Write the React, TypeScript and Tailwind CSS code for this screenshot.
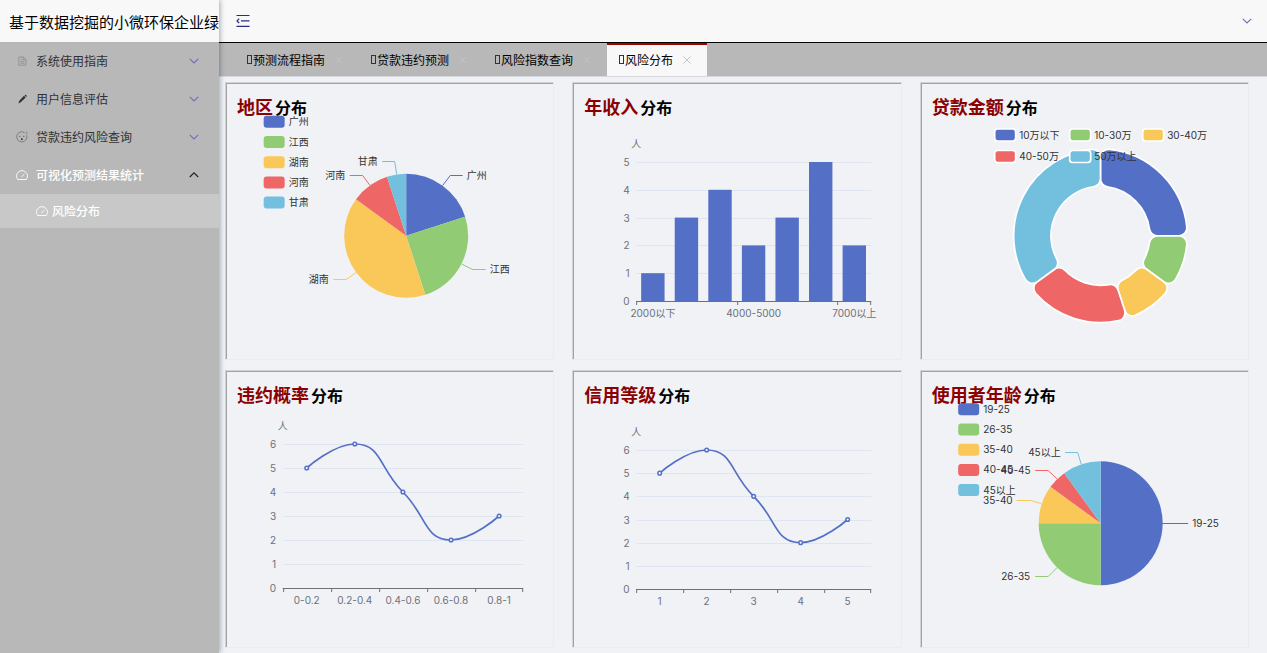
import React from "react";

const BLUE = "#5470c6";
const GREEN = "#91cc75";
const YELLOW = "#fac858";
const RED = "#ee6666";
const CYAN = "#73c0de";
const PALETTE = [BLUE, GREEN, YELLOW, RED, CYAN];

const VIEW_W = 325;
const VIEW_H = 274;

type Pt = [number, number];

function polar(cx: number, cy: number, r: number, deg: number): Pt {
  const a = ((deg - 90) * Math.PI) / 180;
  return [cx + r * Math.cos(a), cy + r * Math.sin(a)];
}

const fmt = (p: Pt) => `${p[0].toFixed(2)} ${p[1].toFixed(2)}`;

function slices(values: number[]) {
  const total = values.reduce((a, b) => a + b, 0);
  let at = 0;
  return values.map((v) => {
    const from = at;
    at += (v / total) * 360;
    return { from, to: at };
  });
}

function wedge(cx: number, cy: number, r: number, from: number, to: number) {
  const large = to - from > 180 ? 1 : 0;
  return `M${cx} ${cy}L${fmt(polar(cx, cy, r, from))}A${r} ${r} 0 ${large} 1 ${fmt(polar(cx, cy, r, to))}Z`;
}

function roundedRing(cx: number, cy: number, r0: number, r1: number, c: number, from: number, to: number) {
  const deg = 180 / Math.PI;
  const ao = Math.asin(c / (r1 - c)) * deg;
  const ai = Math.asin(c / (r0 + c)) * deg;
  const lo = Math.sqrt((r1 - c) ** 2 - c * c);
  const li = Math.sqrt((r0 + c) ** 2 - c * c);
  const p = (r: number, a: number) => fmt(polar(cx, cy, r, a));
  return [
    `M${p(lo, from)}`,
    `A${c} ${c} 0 0 1 ${p(r1, from + ao)}`,
    `A${r1} ${r1} 0 ${to - from - 2 * ao > 180 ? 1 : 0} 1 ${p(r1, to - ao)}`,
    `A${c} ${c} 0 0 1 ${p(lo, to)}`,
    `L${p(li, to)}`,
    `A${c} ${c} 0 0 1 ${p(r0, to - ai)}`,
    `A${r0} ${r0} 0 0 0 ${p(r0, from + ai)}`,
    `A${c} ${c} 0 0 1 ${p(li, from)}`,
    "Z",
  ].join("");
}

const clamp = (v: number, a: number, b: number) => Math.max(Math.min(a, b), Math.min(Math.max(a, b), v));

function smoothPath(pts: Pt[]) {
  let d = `M${fmt(pts[0])}`;
  let out: Pt = pts[0];
  for (let i = 1; i < pts.length; i++) {
    const [x, y] = pts[i];
    const [px, py] = pts[i - 1];
    let inn: Pt = [x, y];
    let nextOut: Pt = [x, y];
    if (i < pts.length - 1) {
      const [nx, ny] = pts[i + 1];
      const lp = Math.hypot(x - px, y - py);
      const ln = Math.hypot(nx - x, ny - y);
      const k = (0.5 * ln) / (ln + lp);
      const ox = clamp(x + (nx - px) * k, x, nx);
      const oy = clamp(y + (ny - py) * k, y, ny);
      const ix = clamp(x - ((ox - x) * lp) / ln, px, x);
      const iy = clamp(y - ((oy - y) * lp) / ln, py, y);
      inn = [ix, iy];
      nextOut = [x + ((x - ix) * ln) / lp, y + ((y - iy) * ln) / lp];
    }
    d += `C${fmt(out)} ${fmt(inn)} ${fmt([x, y])}`;
    out = nextOut;
  }
  return d;
}

function Canvas({ label, children }: { label: string; children: React.ReactNode }) {
  return (
    <svg
      role="img"
      aria-label={label}
      viewBox={`0 0 ${VIEW_W} ${VIEW_H}`}
      className="col-start-1 row-start-1 h-[274px] w-full font-['Inter','Noto_Sans_CJK_SC',sans-serif] text-[10px]"
    >
      {children}
    </svg>
  );
}

function Label({ x, y, anchor = "start", fill = "#333", children }: {
  x: number; y: number; anchor?: "start" | "middle" | "end"; fill?: string; children: React.ReactNode;
}) {
  return (
    <text x={x} y={y + 3.5} textAnchor={anchor} fill={fill}>
      {children}
    </text>
  );
}

type Callout = { name: string; value: number; line: Pt[]; text: Pt; end?: boolean };

function PieChart({ label, cx, cy, legendX, legendTop, data }: {
  label: string; cx: number; cy: number; legendX: number; legendTop: number; data: Callout[];
}) {
  const parts = slices(data.map((d) => d.value));
  return (
    <Canvas label={label}>
      {data.map((d, i) => (
        <g key={d.name}>
          <path d={wedge(cx, cy, 62, parts[i].from, parts[i].to)} fill={PALETTE[i]} />
          <polyline points={d.line.map((p) => p.join(",")).join(" ")} fill="none" stroke={PALETTE[i]} />
          <Label x={d.text[0]} y={d.text[1]} anchor={d.end ? "end" : "start"}>{d.name}</Label>
        </g>
      ))}
      {data.map((d, i) => (
        <g key={d.name}>
          <rect x={legendX} y={legendTop + i * 20.2} width={21} height={12} rx={3} fill={PALETTE[i]} />
          <Label x={legendX + 25} y={legendTop + 6 + i * 20.2}>{d.name}</Label>
        </g>
      ))}
    </Canvas>
  );
}

type AxisProps = { x0: number; x1: number; y0: number; top: number; max: number; ticks: number[]; nameY: number };

function Axes({ x0, x1, y0, top, max, ticks, nameY }: AxisProps) {
  const step = (y0 - top) / max;
  const levels = Array.from({ length: max + 1 }, (_, i) => i);
  return (
    <g>
      {levels.map((v) => {
        const y = Math.round(y0 - v * step);
        return (
          <g key={v}>
            {v > 0 && <line x1={x0} x2={x1} y1={y + 0.5} y2={y + 0.5} stroke="#e0e6f1" />}
            <Label x={x0 - 6.5} y={y} anchor="end" fill="#6e7079">{v}</Label>
          </g>
        );
      })}
      <Label x={x0} y={nameY + 0.5} anchor="middle" fill="#6e7079">人</Label>
      <line x1={x0} x2={x1} y1={y0 + 0.5} y2={y0 + 0.5} stroke="#6e7079" />
      {ticks.map((t) => {
        const x = Math.round(t) + 0.5;
        return <line key={t} x1={x} x2={x} y1={y0} y2={y0 + 4} stroke="#6e7079" />;
      })}
    </g>
  );
}

function BarChart() {
  const values = [1, 3, 4, 2, 3, 5, 2];
  const names = ["2000以下", "", "", "4000-5000", "", "", "7000以上"];
  const x0 = 62, x1 = 297, y0 = 217, top = 78;
  const band = (x1 - x0) / values.length;
  const step = (y0 - top) / 5;
  return (
    <Canvas label="年收入分布">
      <Axes x0={x0} x1={x1} y0={y0} top={top} max={5} ticks={[x0, x0 + band * 3, x0 + band * 6, x1 - 1]} nameY={60} />
      {values.map((v, i) => (
        <g key={i}>
          <rect x={x0 + band * i + 5} y={y0 - v * step} width={23.4} height={v * step} fill={BLUE} />
          {names[i] && <Label x={x0 + band * (i + 0.5)} y={229} anchor="middle" fill="#6e7079">{names[i]}</Label>}
        </g>
      ))}
    </Canvas>
  );
}

function LineChart({ label, names, x0, x1, y0, top, nameY }: {
  label: string; names: string[]; x0: number; x1: number; y0: number; top: number; nameY: number;
}) {
  const values = [5, 6, 4, 2, 3];
  const band = (x1 - x0) / values.length;
  const step = (y0 - top) / 6;
  const pts = values.map((v, i): Pt => [x0 + band * (i + 0.5), y0 - v * step]);
  return (
    <Canvas label={label}>
      <Axes x0={x0} x1={x1} y0={y0} top={top} max={6} ticks={[0, 1, 2, 3, 4, 5].map((i) => x0 + band * i - (i === 5 ? 1 : 0))} nameY={nameY} />
      <path d={smoothPath(pts)} fill="none" stroke={BLUE} strokeWidth={1.7} />
      {pts.map((p, i) => (
        <g key={i}>
          <circle cx={p[0]} cy={p[1]} r={1.8} fill="#fff" stroke={BLUE} strokeWidth={1.5} />
          <Label x={p[0]} y={y0 + 12} anchor="middle" fill="#6e7079">{names[i]}</Label>
        </g>
      ))}
    </Canvas>
  );
}

function DonutChart() {
  const data = [
    { name: "10万以下", value: 25, x: 72.5, y: 51 },
    { name: "10-30万", value: 10, x: 147.5, y: 51 },
    { name: "30-40万", value: 10, x: 220.5, y: 51 },
    { name: "40-50万", value: 20, x: 72.5, y: 72.5 },
    { name: "50万以上", value: 35, x: 147.5, y: 72.5 },
  ];
  const parts = slices(data.map((d) => d.value));
  return (
    <Canvas label="贷款金额分布">
      {data.map((d, i) => (
        <path
          key={d.name}
          d={roundedRing(178.3, 151.8, 49.5, 86.8, 8, parts[i].from, parts[i].to)}
          fill={PALETTE[i]}
          stroke="#fff"
          strokeWidth={1.7}
        />
      ))}
      {data.map((d, i) => (
        <g key={d.name}>
          <rect x={d.x} y={d.y - 6} width={21} height={12} rx={3} fill={PALETTE[i]} stroke="#fff" strokeWidth={1.7} />
          <Label x={d.x + 24.5} y={d.y}>{d.name}</Label>
        </g>
      ))}
    </Canvas>
  );
}

function Card({ title, children }: { title: string; children: React.ReactNode }) {
  return (
    <section className="grid border border-t-[#d2d3d6] border-r-[#ebecef] border-b-[#ebecef] border-l-[#d2d3d6] p-px shadow-[inset_1px_1px_0_#a2a2a4]">
      <h3 className="col-start-1 row-start-1 pt-2 pl-2.5 text-base leading-7 font-bold text-black">
        <span className="mr-0.5 text-lg leading-7 text-[#8b0000]">{title}</span>分布
      </h3>
      {children}
    </section>
  );
}

const regionData: Callout[] = [
  { name: "广州", value: 20, line: [[215.5, 101.5], [223, 91.5], [235.5, 91.5]], text: [239.5, 91] },
  { name: "江西", value: 25, line: [[234.5, 180], [245.5, 185.5], [258.5, 185.5]], text: [262.5, 185] },
  { name: "湖南", value: 40, line: [[129, 188.5], [119, 195.5], [106, 195.5]], text: [101.5, 195], end: true },
  { name: "河南", value: 10, line: [[142.5, 101], [135.5, 91.5], [122.5, 91.5]], text: [118, 91], end: true },
  { name: "甘肃", value: 5, line: [[169.5, 90], [167.5, 77.5], [155, 77.5]], text: [150.5, 77.5], end: true },
];

const ageData: Callout[] = [
  { name: "19-25", value: 50, line: [[240, 151.5], [266, 151.5]], text: [270, 151.5] },
  { name: "26-35", value: 25, line: [[135, 195.5], [126, 204.5], [113, 204.5]], text: [108, 204], end: true },
  { name: "35-40", value: 10, line: [[119, 131.5], [108.5, 128.5], [94.5, 128.5]], text: [90.5, 128.5], end: true },
  { name: "40-45", value: 5, line: [[135, 107], [126, 98.5], [113, 98.5]], text: [108.5, 98.5], end: true },
  { name: "45以上", value: 10, line: [[159, 92], [155.5, 80.5], [143, 80.5]], text: [138.5, 80.5], end: true },
];

function DocIcon() {
  return (
    <svg viewBox="0 0 12 12" className="size-3" fill="none" stroke="#8c8c90" strokeWidth={0.8} aria-hidden="true">
      <path d="M2.8 2h4.6l2.6 2.6v5.6H2.8zM7.2 2v2.8H10M4.4 4.6h1.4M4.4 6.5h4M4.4 8.3h4" />
    </svg>
  );
}

function PenIcon() {
  return (
    <svg viewBox="0 0 12 12" className="size-3" fill="#303133" aria-hidden="true">
      <path d="M8 2.8l1.7 1.6-5 4.9L2.4 10.4l.9-2.6zM8.5 2.3l.6-.4c.3-.2.6-.2.8 0l.7.7c.2.3.2.5 0 .8l-.5.5z" />
    </svg>
  );
}

function FaceIcon() {
  return (
    <svg viewBox="0 0 12 12" className="size-3" fill="none" stroke="#66676b" strokeWidth={0.7} aria-hidden="true">
      <path d="M8.6 1.6A5.1 5.1 0 1 0 10.7 4.4M9.7 1.9l1.5-1.4M10.3 2.8l1.2-.2" />
      <circle cx={3.9} cy={5.2} r={0.5} fill="#303133" stroke="none" />
      <circle cx={7.8} cy={5.2} r={0.5} fill="#303133" stroke="none" />
      <ellipse cx={5.9} cy={8.2} rx={0.8} ry={1.1} fill="#303133" stroke="none" />
    </svg>
  );
}

function GaugeIcon() {
  return (
    <svg viewBox="0 0 12 12" className="size-3" fill="none" stroke="#fff" strokeWidth={0.9} strokeLinecap="round" strokeLinejoin="round" aria-hidden="true">
      <path d="M1.5 10.2A5.4 5.4 0 1 1 10.5 10.2zM5.6 7.8l2.6-2.6" />
    </svg>
  );
}

function Chevron({ up = false, color }: { up?: boolean; color: string }) {
  return (
    <svg viewBox="0 0 12 12" className="size-3" fill="none" stroke={color} strokeWidth={1.1} aria-hidden="true">
      <path d={up ? "M1.8 8L6 3.8 10.2 8" : "M1.8 3.8L6 8l4.2-4.2"} />
    </svg>
  );
}

const menu = [
  { name: "系统使用指南", icon: <DocIcon /> },
  { name: "用户信息评估", icon: <PenIcon /> },
  { name: "贷款违约风险查询", icon: <FaceIcon /> },
  { name: "可视化预测结果统计", icon: <GaugeIcon />, open: true },
];

const tabs = [
  { name: "预测流程指南" },
  { name: "贷款违约预测" },
  { name: "风险指数查询" },
  { name: "风险分布", active: true },
];

export default function App() {
  return (
    <div className="flex min-h-screen bg-[#f0f2f6] font-['Noto_Sans_CJK_SC',sans-serif]">
      <aside className="z-10 w-[219px] shrink-0 bg-[#b8b8b8] shadow-[1px_0_5px_rgba(0,21,41,0.35)]">
        <h1 className="h-[42px] overflow-hidden bg-[#f8f8f8] pl-[9px] text-[15px] leading-[44px] font-normal whitespace-nowrap text-black">
          基于数据挖掘的小微环保企业绿
        </h1>
        <nav>
          {menu.map((m) => (
            <button
              key={m.name}
              type="button"
              aria-expanded={!!m.open}
              className={
                m.open
                  ? "flex h-[38px] w-full items-center gap-2 pr-[19px] pl-4 text-xs font-medium text-white"
                  : "flex h-[38px] w-full items-center gap-2 pr-[19px] pl-4 text-xs text-[#303133]"
              }
            >
              {m.icon}
              <span className="flex-1 text-left">{m.name}</span>
              <Chevron up={m.open} color={m.open ? "#222" : "#6f6cb8"} />
            </button>
          ))}
          <a href="#distribution" className="flex h-[34px] items-center gap-1 bg-[#c8c8c8] pl-9 text-xs font-medium text-white">
            <GaugeIcon />
            风险分布
          </a>
        </nav>
      </aside>

      <div className="flex min-w-0 flex-1 flex-col">
        <header className="flex h-[43px] items-center justify-between border-b border-black bg-[#f8f8f8] pr-3.5 pl-4">
          <button type="button" aria-label="收起菜单" className="px-px">
            <svg viewBox="0 0 14 14" className="size-3.5" fill="none" stroke="#2b2b85" strokeWidth={1.2} aria-hidden="true">
              <path d="M0.5 1.5h13M5 6.9h8.5M0.5 12.3h13M3.2 4.8L1 6.9l2.2 2.1" />
            </svg>
          </button>
          <button type="button" aria-label="展开">
            <Chevron color="#6f6cb8" />
          </button>
        </header>

        <div role="tablist" className="flex h-[34px] border-b border-[#d4d8dd] bg-[#b8b8b8] pl-4">
          {tabs.map((t) => (
            <div
              key={t.name}
              className={
                t.active
                  ? "flex items-center border-t-2 border-[#a50000] bg-[#f8f8f8] pr-3.5 pb-0.5 pl-3 text-xs text-black"
                  : "flex items-center pr-3.5 pl-3 text-xs text-black"
              }
            >
              <button type="button" role="tab" aria-selected={!!t.active} className="flex items-center gap-px">
                <span className="h-[9px] w-[5px] border border-[#333]" />
                {t.name}
              </button>
              <button type="button" aria-label={`关闭${t.name}`} className="ml-2">
                <svg viewBox="0 0 12 12" className="size-3" fill="none" stroke={t.active ? "#c4c4c4" : "#c2c2c2"} aria-hidden="true">
                  <path d="M2.5 2.5l7 7M9.5 2.5l-7 7" />
                </svg>
              </button>
            </div>
          ))}
        </div>

        <main className="grid grid-cols-3 gap-x-[18px] gap-y-2.5 pt-[5px] pr-[18px] pb-1 pl-1.5">
          <Card title="地区">
            <PieChart label="地区分布" cx={179} cy={151.8} legendX={36.5} legendTop={31.8} data={regionData} />
          </Card>
          <Card title="年收入">
            <BarChart />
          </Card>
          <Card title="贷款金额">
            <DonutChart />
          </Card>
          <Card title="违约概率">
            <LineChart label="违约概率分布" names={["0-0.2", "0.2-0.4", "0.4-0.6", "0.6-0.8", "0.8-1"]} x0={55.5} x1={296} y0={216} top={72} nameY={54} />
          </Card>
          <Card title="信用等级">
            <LineChart label="信用等级分布" names={["1", "2", "3", "4", "5"]} x0={62} x1={297} y0={217} top={78} nameY={60} />
          </Card>
          <Card title="使用者年龄">
            <PieChart label="使用者年龄分布" cx={178.5} cy={151.3} legendX={36} legendTop={31.3} data={ageData} />
          </Card>
        </main>
      </div>
    </div>
  );
}
